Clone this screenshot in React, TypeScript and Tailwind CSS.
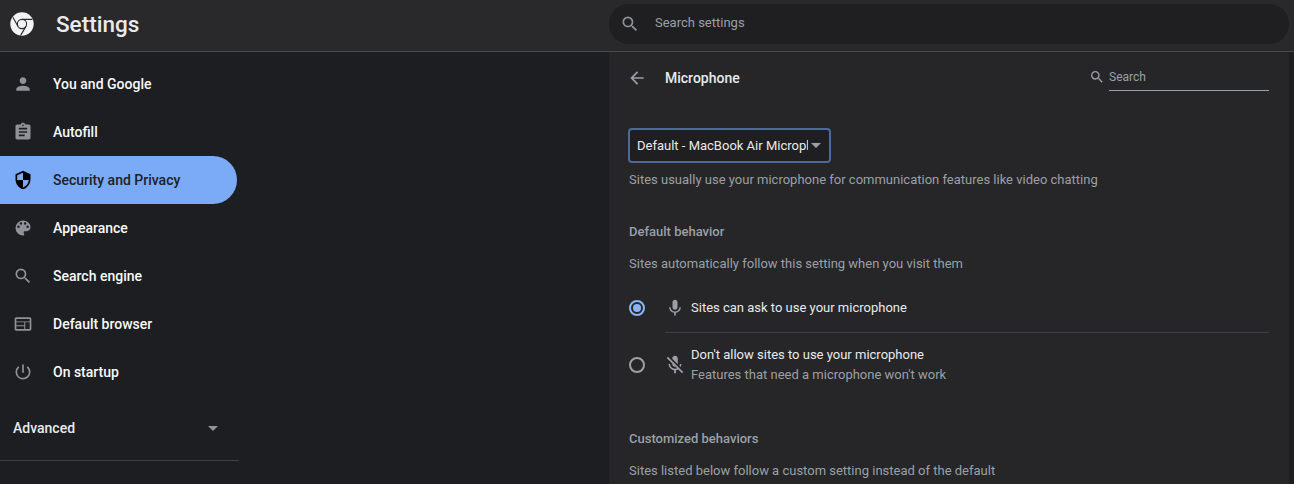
import React from "react";

const Icon = ({ d, className = "" }: { d: string; className?: string }) => (
  <svg viewBox="0 0 24 24" className={`shrink-0 fill-current ${className}`}><path d={d} /></svg>
);

const SEARCH = "M15.5 14h-.79l-.28-.27A6.471 6.471 0 0 0 16 9.5 6.5 6.5 0 1 0 9.5 16c1.61 0 3.09-.59 4.23-1.57l.27.28v.79l5 4.99L20.49 19l-4.99-5zm-6 0C7.01 14 5 11.99 5 9.5S7.01 5 9.5 5 14 7.01 14 9.5 11.99 14 9.5 14z";
const MIC = "M12 14c1.66 0 3-1.34 3-3V5c0-1.66-1.34-3-3-3S9 3.34 9 5v6c0 1.66 1.34 3 3 3zm5.3-3c0 3-2.54 5.1-5.3 5.1S6.7 14 6.7 11H5c0 3.41 2.72 6.23 6 6.72V21h2v-3.28c3.28-.48 6-3.3 6-6.72h-1.7z";
const MIC_OFF = "M19 11h-1.7c0 .74-.16 1.43-.43 2.05l1.23 1.23c.56-.98.9-2.09.9-3.28zm-4.02.17c0-.06.02-.11.02-.17V5c0-1.66-1.34-3-3-3S9 3.34 9 5v.18l5.98 5.99zM4.27 3L3 4.27l6.01 6.01V11c0 1.66 1.33 3 2.99 3 .22 0 .44-.03.65-.08l1.66 1.66c-.71.33-1.5.52-2.31.52-2.76 0-5.3-2.1-5.3-5.1H5c0 3.41 2.72 6.23 6 6.72V21h2v-3.28c.91-.13 1.77-.45 2.54-.9L19.73 21 21 19.73 4.27 3z";

const items = [
  { label: "You and Google", d: "M12 12c2.21 0 4-1.79 4-4s-1.79-4-4-4-4 1.79-4 4 1.79 4 4 4zm0 2c-2.67 0-8 1.34-8 4v2h16v-2c0-2.66-5.33-4-8-4z" },
  { label: "Autofill", d: "M19 3h-4.18C14.4 1.84 13.3 1 12 1c-1.3 0-2.4.84-2.82 2H5c-1.1 0-2 .9-2 2v14c0 1.1.9 2 2 2h14c1.1 0 2-.9 2-2V5c0-1.1-.9-2-2-2zm-7 0c.55 0 1 .45 1 1s-.45 1-1 1-1-.45-1-1 .45-1 1-1zm2 14H7v-2h7v2zm3-4H7v-2h10v2zm0-4H7V7h10v2z" },
  { label: "Security and Privacy", active: true, d: "M12 1L3 5v6c0 5.55 3.84 10.74 9 12 5.16-1.26 9-6.45 9-12V5l-9-4zm0 10.99h7c-.53 4.12-3.28 7.79-7 8.94V12H5V6.3l7-3.11v8.8z" },
  { label: "Appearance", d: "M12 3a9 9 0 0 0 0 18c.83 0 1.5-.67 1.5-1.5 0-.39-.15-.74-.39-1.01-.23-.26-.38-.61-.38-.99 0-.83.67-1.5 1.5-1.5H16c2.76 0 5-2.24 5-5 0-4.42-4.03-8-9-8zm-5.5 9a1.5 1.5 0 1 1 0-3 1.5 1.5 0 0 1 0 3zm3-4a1.5 1.5 0 1 1 0-3 1.5 1.5 0 0 1 0 3zm5 0a1.5 1.5 0 1 1 0-3 1.5 1.5 0 0 1 0 3zm3 4a1.5 1.5 0 1 1 0-3 1.5 1.5 0 0 1 0 3z" },
  { label: "Search engine", d: SEARCH },
  { label: "Default browser", d: "M20 4H4c-1.1 0-2 .9-2 2v12c0 1.1.9 2 2 2h16c1.1 0 2-.9 2-2V6c0-1.1-.9-2-2-2zM4 18v-3.3h9.5V18H4zm9.5-4.5H4V10h9.5v3.5zM20 18h-5.3v-8H20v8zm0-9H4V6h16v3z" },
  { label: "On startup", d: "M13 3h-2v10h2V3zm4.83 2.17l-1.42 1.42A6.92 6.92 0 0 1 19 12c0 3.87-3.13 7-7 7A6.995 6.995 0 0 1 7.58 6.58L6.17 5.17A8.932 8.932 0 0 0 3 12a9 9 0 0 0 18 0c0-2.74-1.23-5.18-3.17-6.83z" },
];

export default function App() {
  return (
    <div className="w-[1294px] h-[484px] overflow-hidden flex flex-col bg-[#1d1e22] text-[13px] leading-[20px] text-[#e8eaed] [font-family:Roboto,sans-serif]">
      <header className="h-[52px] shrink-0 flex items-start bg-[#29292b] border-b border-[#4a4a4c]">
        <div className="w-[609px] h-[48px] shrink-0 flex items-center">
          <svg viewBox="0 0 24 24" className="ml-[10px] w-[24px] h-[24px]">
            <circle cx="12" cy="12" r="11.7" fill="#f1f3f4" />
            <circle cx="12" cy="12" r="4.6" fill="#f1f3f4" stroke="#29292b" strokeWidth="1.1" />
            <path d="M12 7.4h10.4M7.9 14.2L2.9 5.2M15.9 14.4L10.5 23.6" stroke="#29292b" strokeWidth="1.1" fill="none" />
          </svg>
          <span className="ml-[22px] text-[22.5px] leading-[28px] font-medium text-[#e8eaed]">Settings</span>
        </div>
        <div className="mt-[4px] w-[680px] h-[40px] rounded-[20px] bg-[#1f1f21] flex items-center text-[#9aa0a6]">
          <Icon d={SEARCH} className="ml-[11px] w-[20px] h-[20px] text-[#8f9399]" />
          <span className="ml-[15px] -mt-[2px]">Search settings</span>
        </div>
      </header>
      <div className="flex-1 flex min-h-0">
        <nav className="w-[609px] shrink-0 pt-[8px]">
          {items.map((it) => (
            <div
              key={it.label}
              className={`w-[237px] h-[48px] flex items-center pl-[13px] text-[14px] font-medium rounded-r-[24px] ${it.active ? "bg-[#7baaf7] text-[#202124]" : "text-[#f8f9fa]"}`}
            >
              <Icon d={it.d} className={`w-[20px] h-[20px] ${it.active ? "text-[#000000]" : "text-[#8f9399]"}`} />
              <span className="ml-[20px]">{it.label}</span>
            </div>
          ))}
          <div className="w-[239px] mt-[8px] h-[48px] flex items-center justify-between pl-[13px] pr-[21px] text-[14px] font-medium text-[#e8eaed]">
            <span>Advanced</span>
            <span className="w-0 h-0 border-x-[5px] border-x-transparent border-t-[5px] border-t-[#8f9399]" />
          </div>
          <div className="w-[239px] mt-[8px] border-t border-[#3c4043]" />
        </nav>
        <main className="w-[680px] bg-[#262628] flex flex-col">
          <div className="h-[52px] flex items-center shrink-0">
            <Icon d="M20 11H7.83l5.59-5.59L12 4l-8 8 8 8 1.41-1.41L7.83 13H20v-2z" className="ml-[18px] w-[20px] h-[20px] text-[#9aa0a6]" />
            <span className="ml-[18px] text-[14px] font-medium text-[#e8eaed]">Microphone</span>
            <div className="ml-auto mr-[20px] flex items-start h-[27px] -mt-[2px]">
              <Icon d={SEARCH} className="mt-[5px] w-[16px] h-[16px] text-[#9aa0a6]" />
              <div className="ml-[4px] w-[160px] h-[27px] flex items-center border-b border-[#9aa0a6] text-[12px] text-[#9aa0a6]">Search</div>
            </div>
          </div>
          <div className="px-[20px]">
            <div className="mt-[24px] -ml-[1px] w-[203px] h-[35px] rounded-[4px] border-2 border-[#4d6a9f] bg-[#1f1f21] flex items-center pl-[7px] text-[#e8eaed]">
              <span className="w-[171px] overflow-hidden whitespace-nowrap">Default - MacBook Air Microphone</span>
              <span className="ml-[3px] w-0 h-0 border-x-[5px] border-x-transparent border-t-[5px] border-t-[#9aa0a6]" />
            </div>
            <p className="mt-[7px] text-[#9aa0a6]">Sites usually use your microphone for communication features like video chatting</p>
            <h2 className="mt-[32px] font-medium text-[13px] text-[#9aa0a6]">Default behavior</h2>
            <p className="mt-[12px] text-[#9aa0a6]">Sites automatically follow this setting when you visit them</p>
            <div className="mt-[10px] h-[48px] flex items-center">
              <span className="w-[16px] h-[16px] rounded-full border-2 border-[#8ab4f8] flex items-center justify-center">
                <span className="w-[8px] h-[8px] rounded-full bg-[#8ab4f8]" />
              </span>
              <Icon d={MIC} className="ml-[20px] w-[20px] h-[20px] text-[#9aa0a6]" />
              <span className="ml-[6px]">Sites can ask to use your microphone</span>
            </div>
            <div className="ml-[36px] border-t border-[#3c4043]" />
            <div className="h-[40px] mt-[12px] flex items-center">
              <span className="w-[16px] h-[16px] rounded-full border-2 border-[#9aa0a6]" />
              <Icon d={MIC_OFF} className="ml-[19px] w-[22px] h-[22px] text-[#9aa0a6]" />
              <div className="ml-[5px]">
                <div>Don't allow sites to use your microphone</div>
                <div className="text-[#9aa0a6]">Features that need a microphone won't work</div>
              </div>
            </div>
            <h2 className="mt-[44px] font-medium text-[13px] text-[#9aa0a6]">Customized behaviors</h2>
            <p className="mt-[12px] text-[#9aa0a6]">Sites listed below follow a custom setting instead of the default</p>
          </div>
        </main>
      </div>
    </div>
  );
}
